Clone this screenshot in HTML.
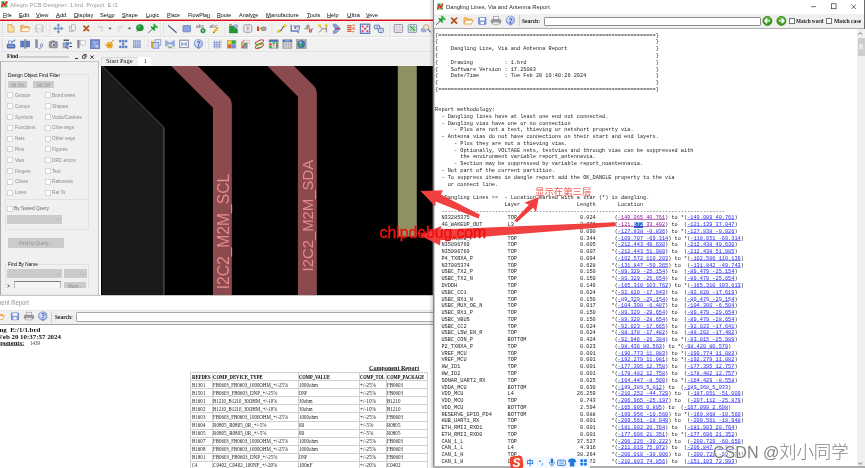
<!DOCTYPE html>
<html><head><meta charset="utf-8"><title>Allegro PCB Designer</title>
<style>
html,body{margin:0;padding:0;}
body{width:865px;height:468px;overflow:hidden;position:relative;background:#fff;font-family:"Liberation Sans",sans-serif;}
#root{position:absolute;left:0;top:0;width:865px;height:468px;overflow:hidden;filter:blur(0.35px);}
#root *{box-sizing:border-box;}
#root>*{position:absolute;}
.t{display:inline-block;white-space:pre;transform-origin:0 0;}
.bm{display:inline-block;width:0;height:0;}
.t u{text-decoration-thickness:0.6px;text-underline-offset:0.3px;text-decoration-color:rgba(30,30,30,0.62);}
pre#rep{left:435.1px;top:32.7px;margin:0;font-family:"Liberation Mono",monospace;font-size:5.25px;line-height:6.76px;color:#242424;white-space:pre;}
pre#rep a{color:#2a2aee;text-decoration:underline;text-decoration-thickness:0.42px;text-underline-offset:0.35px;text-decoration-color:rgba(42,42,238,0.6);}
pre#rep a.v{color:#8a1a9a;text-decoration-color:rgba(138,26,154,0.6);}
pre#rep .sel{background:#1a6ad6;color:#fff;}
</style></head><body>
<div id="root">
<svg style="left:1.20px;top:1.00px" width="6.6" height="6.6" viewBox="0 0 8 8"><rect x="0" y="0" width="8" height="8" fill="#86dc80"/><path d="M0.5 7.6 L3 2.2 L4.6 5.2 L7.6 0.4" stroke="#e0202a" stroke-width="1.7" fill="none"/><path d="M0.6 1.6h2.2M5 6.6h2.4" stroke="#2c9a3a" stroke-width="1.1"/></svg>
<span class="t" style="left:10.20px;top:1.81px;font-size:5.90px;line-height:7.67px;color:#9a9a9a;transform:scaleX(0.9857);">Allegro PCB Designer: 1.brd  Project: E:/1</span>
<span class="t" style="left:3.40px;top:11.76px;font-size:6.00px;line-height:7.80px;color:#0c0c0c;transform:scaleX(0.8981);"><u>F</u>ile</span>
<span class="t" style="left:19.10px;top:11.76px;font-size:6.00px;line-height:7.80px;color:#0c0c0c;transform:scaleX(0.9943);"><u>E</u>dit</span>
<span class="t" style="left:36.25px;top:11.76px;font-size:6.00px;line-height:7.80px;color:#0c0c0c;transform:scaleX(0.9480);"><u>V</u>iew</span>
<span class="t" style="left:55.90px;top:11.76px;font-size:6.00px;line-height:7.80px;color:#0c0c0c;transform:scaleX(0.9670);"><u>A</u>dd</span>
<span class="t" style="left:73.75px;top:11.76px;font-size:6.00px;line-height:7.80px;color:#0c0c0c;transform:scaleX(0.9829);"><u>D</u>isplay</span>
<span class="t" style="left:100.00px;top:11.76px;font-size:6.00px;line-height:7.80px;color:#0c0c0c;transform:scaleX(0.9393);">Set<u>u</u>p</span>
<span class="t" style="left:122.25px;top:11.76px;font-size:6.00px;line-height:7.80px;color:#0c0c0c;transform:scaleX(0.9007);"><u>S</u>hape</span>
<span class="t" style="left:145.75px;top:11.76px;font-size:6.00px;line-height:7.80px;color:#0c0c0c;transform:scaleX(0.9297);"><u>L</u>ogic</span>
<span class="t" style="left:167.00px;top:11.76px;font-size:6.00px;line-height:7.80px;color:#0c0c0c;transform:scaleX(0.8649);"><u>P</u>lace</span>
<span class="t" style="left:187.75px;top:11.76px;font-size:6.00px;line-height:7.80px;color:#0c0c0c;transform:scaleX(0.8911);">FlowPla<u>n</u></span>
<span class="t" style="left:217.25px;top:11.76px;font-size:6.00px;line-height:7.80px;color:#0c0c0c;transform:scaleX(0.8889);"><u>R</u>oute</span>
<span class="t" style="left:239.40px;top:11.76px;font-size:6.00px;line-height:7.80px;color:#0c0c0c;transform:scaleX(0.9059);">Analy<u>z</u>e</span>
<span class="t" style="left:266.25px;top:11.76px;font-size:6.00px;line-height:7.80px;color:#0c0c0c;transform:scaleX(0.9817);"><u>M</u>anufacture</span>
<span class="t" style="left:306.50px;top:11.76px;font-size:6.00px;line-height:7.80px;color:#0c0c0c;transform:scaleX(0.9454);"><u>T</u>ools</span>
<span class="t" style="left:327.25px;top:11.76px;font-size:6.00px;line-height:7.80px;color:#0c0c0c;transform:scaleX(0.9305);"><u>H</u>elp</span>
<span class="t" style="left:346.50px;top:11.76px;font-size:6.00px;line-height:7.80px;color:#0c0c0c;transform:scaleX(1.0167);"><u>U</u>ltra</span>
<span class="t" style="left:366.25px;top:11.76px;font-size:6.00px;line-height:7.80px;color:#0c0c0c;transform:scaleX(0.8945);"><u>V</u>eve</span>
<div style="left:0.00px;top:19.00px;width:433.00px;height:1.00px;background:rgba(214,22,28,0.5);"></div>
<div style="left:0.00px;top:20.00px;width:433.00px;height:1.00px;background:#d4141a;"></div>
<div style="left:0.00px;top:21.00px;width:433.00px;height:30.60px;background:#f1f1f1;"></div>
<div style="left:0.00px;top:35.90px;width:433.00px;height:0.70px;background:#e2e2e2;"></div>
<div style="left:0.00px;top:36.60px;width:433.00px;height:0.60px;background:#fbfbfb;"></div>
<svg style="left:0;top:20px" width="433" height="33" viewBox="0 20 433 33"><path d="M2.30 23.40V34.80" stroke="#b5b5b5" stroke-width="0.7" stroke-dasharray="0.7 1.1" fill="none"/>
<path d="M49.60 23.40V34.80" stroke="#b5b5b5" stroke-width="0.7" stroke-dasharray="0.7 1.1" fill="none"/>
<path d="M163.60 23.40V34.80" stroke="#b5b5b5" stroke-width="0.7" stroke-dasharray="0.7 1.1" fill="none"/>
<path d="M225.00 23.40V34.80" stroke="#b5b5b5" stroke-width="0.7" stroke-dasharray="0.7 1.1" fill="none"/>
<path d="M272.00 23.40V34.80" stroke="#b5b5b5" stroke-width="0.7" stroke-dasharray="0.7 1.1" fill="none"/>
<path d="M389.50 23.40V34.80" stroke="#b5b5b5" stroke-width="0.7" stroke-dasharray="0.7 1.1" fill="none"/>
<path d="M46.70 21.60V35.60" stroke="#dcdcdc" stroke-width="0.7" fill="none"/><path d="M47.40 21.60V35.60" stroke="#fafafa" stroke-width="0.7" fill="none"/>
<path d="M160.70 21.60V35.60" stroke="#dcdcdc" stroke-width="0.7" fill="none"/><path d="M161.40 21.60V35.60" stroke="#fafafa" stroke-width="0.7" fill="none"/>
<path d="M223.00 21.60V35.60" stroke="#dcdcdc" stroke-width="0.7" fill="none"/><path d="M223.70 21.60V35.60" stroke="#fafafa" stroke-width="0.7" fill="none"/>
<path d="M269.60 21.60V35.60" stroke="#dcdcdc" stroke-width="0.7" fill="none"/><path d="M270.30 21.60V35.60" stroke="#fafafa" stroke-width="0.7" fill="none"/>
<path d="M386.30 21.60V35.60" stroke="#dcdcdc" stroke-width="0.7" fill="none"/><path d="M387.00 21.60V35.60" stroke="#fafafa" stroke-width="0.7" fill="none"/>
<path d="M2.30 38.60V50.00" stroke="#b5b5b5" stroke-width="0.7" stroke-dasharray="0.7 1.1" fill="none"/>
<path d="M147.75 38.60V50.00" stroke="#b5b5b5" stroke-width="0.7" stroke-dasharray="0.7 1.1" fill="none"/>
<path d="M208.40 38.60V50.00" stroke="#b5b5b5" stroke-width="0.7" stroke-dasharray="0.7 1.1" fill="none"/>
<path d="M144.40 37.20V51.00" stroke="#dcdcdc" stroke-width="0.7" fill="none"/><path d="M145.10 37.20V51.00" stroke="#fafafa" stroke-width="0.7" fill="none"/>
<path d="M205.50 37.20V51.00" stroke="#dcdcdc" stroke-width="0.7" fill="none"/><path d="M206.20 37.20V51.00" stroke="#fafafa" stroke-width="0.7" fill="none"/>
<path d="M7.90 24.50h3.6l2.4 2.4v5.2h-6z" fill="#fbe3aa" stroke="#e49748" stroke-width="0.8" /><path d="M11.50 24.50v2.4h2.4" fill="#fff3cf" stroke="#e49748" stroke-width="0.6" />
<path d="M20.80 31.60v-6.2h3l1 1.2h4v1.6" fill="#f7c27a" stroke="#ea9a3c" stroke-width="0.8" /><path d="M20.80 31.60l1.8-3.8h7.4l-1.8 3.8z" fill="#fff" stroke="#ea9a3c" stroke-width="0.8" />
<rect x="35.70" y="25.00" width="7.20" height="6.80" fill="#dadada" stroke="#b9b9b9" stroke-width="0.8" rx="0.6"/><rect x="36.90" y="25.30" width="4.80" height="2.60" fill="#f6f6f6"/><rect x="37.60" y="29.30" width="3.40" height="2.40" fill="#f6f6f6"/>
<path d="M58.40 23.80v9.4M53.70 28.50h9.4" fill="none" stroke="#7d9dca" stroke-width="1.5" />
<path d="M58.40 23.50l1.9 2.2h-3.8zM58.40 33.50l1.9-2.2h-3.8zM53.40 28.50l2.2-1.9v3.8zM63.40 28.50l-2.2-1.9v3.8z" fill="#6f92c4" />
<rect x="69.40" y="26.20" width="4.20" height="5.40" fill="#ececec" stroke="#a9a9a9" stroke-width="0.7"/><rect x="71.40" y="24.80" width="4.20" height="5.40" fill="#f4f4f4" stroke="#a9a9a9" stroke-width="0.7"/>
<path d="M84.00 26.20l4.50 4.50M88.50 26.20l-4.50 4.50" fill="none" stroke="#b4501e" stroke-width="1.7" stroke-linecap="round"/>
<path d="M99 27.2c3-1.6 4.8 1 2.4 4.6" fill="none" stroke="#cfcfcf" stroke-width="1.1" /><path d="M98 25.6l0.4 3l2.6-1.2z" fill="#cfcfcf" />
<path d="M108.40 27.80h3.2l-1.6 1.7z" fill="#333"/>
<path d="M121.6 27.2c-3-1.6-4.8 1-2.4 4.6" fill="none" stroke="#d6d6d6" stroke-width="1.1" /><path d="M122.6 25.6l-0.4 3l-2.6-1.2z" fill="#d6d6d6" />
<path d="M127.90 27.80h3.2l-1.6 1.7z" fill="#333"/>
<path d="M136.4 32l1.6-2" fill="none" stroke="#777" stroke-width="0.7" /><ellipse cx="139.9" cy="27.8" rx="3.5" ry="3.2" fill="#1f9a32" stroke="#157026" stroke-width="0.5"/><circle cx="138.80" cy="26.60" r="1.10" fill="#5fcf6c"/>
<path d="M148.50 32.80L152.60 28.70" stroke="#4a4a4a" stroke-width="0.8" stroke-linecap="round" fill="none"/><path d="M155.10 26.30L153.10 28.30" stroke="#2aa83a" stroke-width="2.6" stroke-linecap="round" fill="none"/><path d="M151.50 27.00L154.50 30.00" stroke="#1f8f30" stroke-width="1.5" stroke-linecap="round" fill="none"/><path d="M154.10 24.60L156.90 27.40" stroke="#35b846" stroke-width="1.9" stroke-linecap="round" fill="none"/>
<path d="M168 25.2L176.6 32.8" fill="none" stroke="#56658f" stroke-width="1.2" />
<rect x="183.00" y="25.60" width="7.50" height="6.20" fill="#8ea4dc" stroke="#5a74b8" stroke-width="0.7" rx="0.5"/>
<text x="196" y="27.9" font-family="Liberation Sans, sans-serif" font-size="5" fill="#5a5a5a">abc</text><circle cx="203.00" cy="30.70" r="2.30" fill="#1f9a30" stroke="#15732a" stroke-width="0.4"/><path d="M203 29.7v2M202 30.7h2" fill="none" stroke="#fff" stroke-width="0.6" />
<text x="209.6" y="27.9" font-family="Liberation Sans, sans-serif" font-size="5" fill="#6a6a6a">abc</text><path d="M213.6 32.6l4.6-5.4" fill="none" stroke="#f2b21e" stroke-width="2" /><path d="M213 33.2l0.4-1.4l1 0.9z" fill="#444" />
<path d="M229.4 33v-7h4.4l3.6 3.2v3.8z" fill="#1f9a32" stroke="#157026" stroke-width="0.4" /><circle cx="235.80" cy="26.40" r="1.90" fill="#a9b9e0" stroke="#6a7cae" stroke-width="0.5"/><path d="M229 24.8h3" fill="none" stroke="#c43a2a" stroke-width="0.8" />
<rect x="243.80" y="24.80" width="8.00" height="7.40" fill="#eef1f8" stroke="#8b97b8" stroke-width="1" rx="1.6"/><path d="M246 27.4h3.6M246 29.4h3.6M247.8 26.4v4" fill="none" stroke="#d26a5a" stroke-width="0.6" />
<rect x="257.00" y="26.40" width="2.00" height="4.60" fill="#d1452c"/><rect x="259.00" y="27.60" width="2.00" height="2.20" fill="#f3d33a"/><ellipse cx="263.6" cy="28.8" rx="3" ry="2.3" fill="#8a8a8a"/><path d="M261.6 28.2h4M261.6 29.6h4" fill="none" stroke="#d8d8d8" stroke-width="0.5" />
<path d="M278.4 31.4l3-1l1.6-3.6l2.4-0.8" fill="none" stroke="#333" stroke-width="0.9" /><circle cx="278.20" cy="31.60" r="1.30" fill="#f3df1c" stroke="#c9b000" stroke-width="0.3"/><circle cx="285.00" cy="25.90" r="1.30" fill="#f3df1c" stroke="#c9b000" stroke-width="0.3"/>
<path d="M291.2 24.8v6.2h7v2M293.6 26.2h5.6v3.6" fill="none" stroke="#5c7cc4" stroke-width="1.3" /><circle cx="295.40" cy="28.00" r="1.00" fill="#d63c30"/><rect x="296.60" y="26.80" width="2.20" height="2.60" fill="#c7d3f0"/>
<path d="M304.4 28.8h2l0.8-3.6h1.6l0.8 7h1.6l0.6-3.4h1.4" fill="none" stroke="#7a7a7a" stroke-width="1" /><path d="M307.8 26v3.6M310.4 28.8v3" fill="none" stroke="#d8433a" stroke-width="0.6" />
<path d="M319.2 25.6l3 3.2l-3 3.6M326.4 25.6v6.8" fill="none" stroke="#8a8a8a" stroke-width="1" /><path d="M322.4 28.8h3.6" fill="none" stroke="#d63c30" stroke-width="0.8" /><circle cx="319.60" cy="25.50" r="1.30" fill="#f3df1c" stroke="#c9b000" stroke-width="0.3"/><circle cx="326.20" cy="25.50" r="1.30" fill="#f3df1c" stroke="#c9b000" stroke-width="0.3"/>
<path d="M333.4 24.2h2.4l4.8 4.4l-4.8 4.6h-2.4v-2.2l2.6-2.4l-2.6-2.2z" fill="#8aa2dc" stroke="#5570b8" stroke-width="0.6" /><path d="M335 28.6h3.4" fill="none" stroke="#b8322a" stroke-width="1.1" /><path d="M338 27.6l1.4 1l-1.4 1z" fill="#b8322a" />
<rect x="347.20" y="25.00" width="4.40" height="1.20" fill="#d5502c"/><rect x="352.20" y="24.70" width="2.80" height="1.00" fill="#e0714c"/>
<rect x="347.20" y="26.90" width="4.40" height="1.20" fill="#d5502c"/><rect x="352.20" y="27.40" width="2.80" height="1.00" fill="#e0714c"/>
<rect x="347.20" y="28.80" width="4.40" height="1.20" fill="#d5502c"/><rect x="352.20" y="28.50" width="2.80" height="1.00" fill="#e0714c"/>
<rect x="347.20" y="30.70" width="4.40" height="1.20" fill="#d5502c"/><rect x="352.20" y="31.20" width="2.00" height="1.00" fill="#e0714c"/>
<rect x="360.40" y="24.20" width="9.30" height="9.20" fill="#dfe5f6" stroke="#5d7cc6" stroke-width="1.2"/>
<path d="M362 25.8l6 6M368 25.8l-6 6" fill="none" stroke="#e9a7a0" stroke-width="0.7" />
<circle cx="362.60" cy="26.40" r="0.95" fill="#dc3a30"/>
<circle cx="367.40" cy="26.40" r="0.95" fill="#dc3a30"/>
<circle cx="365.00" cy="28.80" r="0.95" fill="#dc3a30"/>
<circle cx="362.60" cy="31.20" r="0.95" fill="#dc3a30"/>
<circle cx="367.40" cy="31.20" r="0.95" fill="#dc3a30"/>
<rect x="374.40" y="25.20" width="5.20" height="3.60" fill="#e8ecf8" stroke="#5d76b4" stroke-width="1" rx="0.6"/><rect x="378.40" y="28.20" width="4.80" height="4.20" fill="#e8ecf8" stroke="#5d76b4" stroke-width="1" rx="0.6"/><path d="M376 27h2M380 30.4h1.6" fill="none" stroke="#3c4f8c" stroke-width="0.6" />
<rect x="394.20" y="24.60" width="8.40" height="7.80" fill="#f0f2f8" stroke="#7f8db4" stroke-width="0.9" rx="0.6"/><path d="M397 25v7M399.8 25v7M394.6 27.2h7.6M394.6 29.8h7.6" fill="none" stroke="#e0a8a0" stroke-width="0.6" />
<rect x="408.20" y="24.60" width="8.40" height="7.80" fill="#f0f2f8" stroke="#7f8db4" stroke-width="0.9" rx="0.6"/><path d="M411 25v7M413.8 25v7M408.6 27.2h7.6M408.6 29.8h7.6" fill="none" stroke="#58b85c" stroke-width="0.8" /><path d="M410 26l5 5" fill="none" stroke="#2d9a3a" stroke-width="0.9" />
<rect x="421.40" y="28.40" width="4.60" height="3.40" fill="#9db3e4" stroke="#6a84c8" stroke-width="0.5" rx="0.5"/><circle cx="426.20" cy="27.20" r="2.70" fill="#dbe6f8" stroke="#d99a5c" stroke-width="0.9"/><path d="M428.2 29.4l2.6 3" fill="none" stroke="#5870b4" stroke-width="1.3" />
<rect x="7.00" y="44.20" width="8.00" height="4.00" fill="#4e6fb6" stroke="#3c5a9c" stroke-width="0.4" rx="0.6"/><rect x="8.40" y="41.00" width="3.40" height="3.00" fill="#e6ebf8" stroke="#6a84c4" stroke-width="0.6"/><path d="M12 42.4l3.2-2.6" fill="none" stroke="#5d7cc6" stroke-width="1.1" /><path d="M8.2 46.2h5.6" fill="none" stroke="#e0e6f6" stroke-width="0.7" />
<rect x="20.60" y="41.00" width="3.80" height="6.00" fill="#5a7cc4" stroke="#4666ae" stroke-width="0.4"/><rect x="26.00" y="41.00" width="3.80" height="6.00" fill="#5a7cc4" stroke="#4666ae" stroke-width="0.4"/><rect x="24.30" y="39.80" width="1.80" height="8.60" fill="#8c95a8" stroke="#6c7484" stroke-width="0.3"/>
<rect x="35.60" y="39.80" width="2.00" height="8.00" fill="#8c8c94" stroke="#6c6c74" stroke-width="0.3"/><path d="M38.6 48.4c2.8 0.4 4.6-2.8 3.8-4.6c-1.6-1-2.6 1.6-1.4 3" fill="none" stroke="#6b84c4" stroke-width="1" />
<rect x="49.20" y="41.60" width="8.20" height="6.20" fill="#9a9a9a" stroke="#707070" stroke-width="0.5" rx="0.8"/><rect x="51.40" y="40.40" width="3.20" height="1.40" fill="#8a8a8a"/><circle cx="53.60" cy="44.80" r="2.30" fill="#e8ecf4" stroke="#666" stroke-width="0.5"/><circle cx="53.90" cy="44.90" r="1.10" fill="#3f63b4"/>
<rect x="63.00" y="42.60" width="5.00" height="5.20" fill="#a3aec6" stroke="#6f7a94" stroke-width="0.5" rx="0.6"/><path d="M65.4 46.6l3 2" fill="none" stroke="#5d76b4" stroke-width="1.4" /><rect x="63.60" y="39.60" width="5.40" height="1.20" fill="#333"/><rect x="69.40" y="42.60" width="2.40" height="1.00" fill="#333"/><rect x="69.40" y="46.00" width="2.40" height="1.00" fill="#333"/><rect x="66.00" y="42.20" width="3.00" height="3.00" fill="#5b7ccc"/>
<rect x="77.60" y="40.20" width="1.70" height="7.60" fill="#85878e" stroke="#6a6c74" stroke-width="0.3"/><path d="M78.5 47.6v1.2" fill="none" stroke="#777" stroke-width="0.7" /><rect x="80.60" y="40.40" width="4.60" height="4.60" fill="#fbfbfb" stroke="#b4b4b4" stroke-width="0.6"/>
<rect x="90.40" y="39.80" width="9.30" height="8.80" fill="#7690d2" stroke="#4f6db6" stroke-width="0.7"/><path d="M92.6 42h2.2v1.6M97.6 41.6l-2.4 2.2M92.4 46.6l2.4-2M95.8 45.4h2.2v1.8h-2.2z" fill="none" stroke="#dfe6f8" stroke-width="0.8" />
<path d="M104.8 45.2h3.4M110.4 43.6l2.6-3" fill="none" stroke="#f3a21e" stroke-width="1" /><circle cx="109.60" cy="45.20" r="2.90" fill="#f8b62a" stroke="#d98a10" stroke-width="0.6"/><path d="M108.2 45.4h3" fill="none" stroke="#8a5a10" stroke-width="0.7" /><circle cx="113.20" cy="40.60" r="0.80" fill="#f3a21e"/>
<rect x="119.20" y="40.00" width="2.10" height="2.30" fill="#6c89cf" stroke="#4f6cb6" stroke-width="0.3" rx="0.5"/>
<rect x="119.20" y="45.80" width="2.10" height="2.30" fill="#6c89cf" stroke="#4f6cb6" stroke-width="0.3" rx="0.5"/>
<rect x="122.10" y="40.00" width="2.10" height="2.30" fill="#6c89cf" stroke="#4f6cb6" stroke-width="0.3" rx="0.5"/>
<rect x="122.10" y="42.90" width="2.10" height="2.30" fill="#6c89cf" stroke="#4f6cb6" stroke-width="0.3" rx="0.5"/>
<rect x="122.10" y="45.80" width="2.10" height="2.30" fill="#6c89cf" stroke="#4f6cb6" stroke-width="0.3" rx="0.5"/>
<rect x="125.00" y="40.00" width="2.10" height="2.30" fill="#6c89cf" stroke="#4f6cb6" stroke-width="0.3" rx="0.5"/>
<rect x="125.00" y="45.80" width="2.10" height="2.30" fill="#6c89cf" stroke="#4f6cb6" stroke-width="0.3" rx="0.5"/>
<rect x="133.00" y="40.20" width="1.60" height="1.60" fill="#6c86c8" rx="0.4"/>
<rect x="133.00" y="42.25" width="1.60" height="1.60" fill="#6c86c8" rx="0.4"/>
<rect x="133.00" y="44.30" width="1.60" height="1.60" fill="#6c86c8" rx="0.4"/>
<rect x="133.00" y="46.35" width="1.60" height="1.60" fill="#6c86c8" rx="0.4"/>
<rect x="135.05" y="40.20" width="1.60" height="1.60" fill="#6c86c8" rx="0.4"/>
<rect x="135.05" y="42.25" width="1.60" height="1.60" fill="#6c86c8" rx="0.4"/>
<rect x="135.05" y="44.30" width="1.60" height="1.60" fill="#6c86c8" rx="0.4"/>
<rect x="135.05" y="46.35" width="1.60" height="1.60" fill="#6c86c8" rx="0.4"/>
<rect x="137.10" y="40.20" width="1.60" height="1.60" fill="#6c86c8" rx="0.4"/>
<rect x="137.10" y="42.25" width="1.60" height="1.60" fill="#6c86c8" rx="0.4"/>
<rect x="137.10" y="44.30" width="1.60" height="1.60" fill="#6c86c8" rx="0.4"/>
<rect x="137.10" y="46.35" width="1.60" height="1.60" fill="#6c86c8" rx="0.4"/>
<rect x="139.15" y="40.20" width="1.60" height="1.60" fill="#6c86c8" rx="0.4"/>
<rect x="139.15" y="42.25" width="1.60" height="1.60" fill="#6c86c8" rx="0.4"/>
<rect x="139.15" y="44.30" width="1.60" height="1.60" fill="#6c86c8" rx="0.4"/>
<rect x="139.15" y="46.35" width="1.60" height="1.60" fill="#6c86c8" rx="0.4"/>
<rect x="155.00" y="39.80" width="5.80" height="5.80" fill="#e9eefb" stroke="#6f88cc" stroke-width="0.7"/><rect x="152.80" y="42.40" width="6.00" height="5.80" fill="#c5d1f0" stroke="#5f7ac4" stroke-width="0.7"/><rect x="151.20" y="41.60" width="1.80" height="6.00" fill="#d8a43c" stroke="#b8862a" stroke-width="0.3"/>
<path d="M165.6 40.4l4.4 2.6l4.4-2.6v5.8l-4.4-2.6l-4.4 2.6z" fill="#9ab0e4" stroke="#6e88cc" stroke-width="0.5" /><rect x="168.00" y="46.40" width="6.60" height="1.60" fill="#fff" stroke="#999" stroke-width="0.4"/><rect x="168.40" y="46.70" width="3.60" height="1.00" fill="#3fb44a"/>
<rect x="179.60" y="40.20" width="8.80" height="7.40" fill="#f2f4f8" stroke="#8a8e9c" stroke-width="1"/><path d="M181.4 42.4l2.6 1.5l2.6-1.5v3.4l-2.6-1.5l-2.6 1.5z" fill="#9ab0e4" stroke="#6e88cc" stroke-width="0.4" />
<circle cx="198.40" cy="43.80" r="4.10" fill="#aebfec" stroke="#6a80c4" stroke-width="0.7"/><path d="M197.20 47.00l1.6 2.4l1.2-2.6z" fill="#6a82c8" /><circle cx="197.80" cy="42.80" r="2.60" fill="#dbe4f8"/><text x="196.60" y="46.10" font-family="Liberation Sans, sans-serif" font-weight="bold" font-size="6.4" fill="#2a3f96">?</text>
<path d="M214.6 40.6v8M217 40.6v8M219.4 40.6v8M213 42.4h8.6M213 44.6h8.6M213 46.8h8.6" fill="none" stroke="#6f88c8" stroke-width="0.7" /><path d="M220.4 39.6l1.6 1.8" fill="none" stroke="#f0a858" stroke-width="1" />
<rect x="227.00" y="40.00" width="9.20" height="8.60" fill="#a8a8a8"/><rect x="227.90" y="40.80" width="3.40" height="3.00" fill="#f3dc1e"/><rect x="232.00" y="40.80" width="3.40" height="3.00" fill="#2fae3e"/><rect x="227.90" y="44.80" width="3.40" height="3.00" fill="#e0602c"/><rect x="232.00" y="44.80" width="3.40" height="3.00" fill="#6f8cd8"/>
<rect x="241.20" y="42.60" width="6.40" height="6.00" fill="#909090"/><circle cx="242.80" cy="44.20" r="0.90" fill="#f3dc1e"/><circle cx="245.80" cy="44.20" r="0.90" fill="#2fae3e"/><circle cx="242.80" cy="47.00" r="0.90" fill="#e0602c"/><circle cx="245.80" cy="47.00" r="0.90" fill="#6f8cd8"/><path d="M241.4 42.2l3.4-2" fill="none" stroke="#d8433a" stroke-width="0.9" /><rect x="246.00" y="39.80" width="1.60" height="1.60" fill="#c9c9c9"/><rect x="248.40" y="39.80" width="1.60" height="1.60" fill="#c9c9c9"/><rect x="248.40" y="42.40" width="1.60" height="1.60" fill="#c9c9c9"/>
<ellipse cx="259.4" cy="42.2" rx="4.4" ry="1.6" fill="none" stroke="#d8433a" stroke-width="1" transform="rotate(-22 259.4 42.2)"/><ellipse cx="259.4" cy="46.2" rx="4.4" ry="1.6" fill="none" stroke="#d8433a" stroke-width="1" transform="rotate(-22 259.4 46.2)"/><path d="M256 44.6l6.6-1.4M257 48l5-1" fill="none" stroke="#2fa63e" stroke-width="1.1" /><circle cx="258.40" cy="44.40" r="0.80" fill="#e8d81e"/>
<rect x="269.00" y="39.80" width="9.20" height="8.80" fill="#c2c2c2" stroke="#8f8f8f" stroke-width="0.4"/><rect x="269.00" y="39.80" width="9.20" height="2.00" fill="#4f6fc0"/><path d="M272 42v6.4M275.2 42v6.4" fill="none" stroke="#f4f4f4" stroke-width="0.8" /><rect x="269.60" y="43.60" width="2.00" height="1.60" fill="#e0302c"/><rect x="272.80" y="42.40" width="2.00" height="1.60" fill="#2fae3e"/><rect x="276.00" y="44.80" width="1.80" height="1.60" fill="#e0302c"/><rect x="269.60" y="45.80" width="2.00" height="2.20" fill="#2fae3e"/><rect x="276.00" y="42.20" width="1.80" height="2.20" fill="#2fae3e"/><rect x="276.00" y="46.80" width="1.80" height="1.40" fill="#2fae3e"/>
<rect x="282.80" y="39.80" width="9.20" height="8.80" fill="#b4b4b4" stroke="#8f8f8f" stroke-width="0.4"/><rect x="282.80" y="39.80" width="9.20" height="2.20" fill="#4f6fc0"/><path d="M285.2 42v6.4M287.4 42v6.4M289.6 42v6.4" fill="none" stroke="#e6e6e6" stroke-width="0.7" /><path d="M284.6 40.9h5.4" fill="none" stroke="#dfe6fa" stroke-width="0.7" />
<rect x="296.40" y="39.60" width="9.80" height="9.20" fill="#a4a4a4" stroke="#8a8a8a" stroke-width="0.4"/><circle cx="301.20" cy="44.20" r="3.50" fill="#3f6fd0" stroke="#2d55a8" stroke-width="0.4"/><path d="M299 42.2c1.4-1 2.6-0.4 2.4 0.8c-0.4 1.2 1.8 1 1.4 2.6c-0.6 1.4-2 0.4-2.4 1.8c-1.6-0.4-2.4-3.2-1.4-5.2z" fill="#3fae4a" /><circle cx="300.60" cy="42.40" r="0.90" fill="#dfe9fb"/></svg>
<div style="left:0.00px;top:51.60px;width:101.00px;height:10.00px;background:#f0f0f0;"></div>
<div style="left:0.00px;top:51.40px;width:433.00px;height:0.60px;background:#e3e3e3;"></div>
<span class="t" style="left:6.90px;top:53.11px;font-size:5.60px;line-height:7.28px;color:#111;font-family:'Liberation Serif','Noto Serif CJK SC',serif;font-weight:bold;transform:scaleX(0.9997);">Find</span>
<div style="left:19.40px;top:56.00px;width:49.60px;height:2.00px;background:#cfcfcf;"></div>
<div style="left:74.50px;top:57.90px;width:3.60px;height:1.00px;background:#333;"></div>
<svg style="left:81.80px;top:54.20px" width="4.8" height="4.8" viewBox="0 0 4.8 4.8"><path d="M1.5 0.5h2.8v2.6M0.5 1.7h2.8v2.6h-2.8z" fill="none" stroke="#333" stroke-width="0.8"/></svg>
<svg style="left:90.40px;top:54.60px" width="4.2" height="4.2" viewBox="0 0 4.2 4.2"><path d="M0.5 0.5L3.7 3.7M3.7 0.5L0.5 3.7" stroke="#222" stroke-width="0.9"/></svg>
<div style="left:0.00px;top:61.20px;width:99.20px;height:234.60px;background:#f0f0f0;border:0.8px solid #c3c3c3;border-left:1.1px solid #a9a9a9;"></div>
<div style="left:5.00px;top:74.40px;width:84.00px;height:155.90px;border:0.7px solid #e1e1e1;"></div>
<div style="left:7.40px;top:72.00px;width:53.40px;height:5.00px;background:#f0f0f0;"></div>
<span class="t" style="left:8.00px;top:71.71px;font-size:5.60px;line-height:7.28px;color:#0e0e0e;transform:scaleX(0.8447);">Design Object Find Filter</span>
<div style="left:7.60px;top:81.30px;width:19.30px;height:6.90px;background:#cbcbcb;"></div>
<span class="t" style="left:10.60px;top:81.90px;font-size:5.40px;line-height:7.02px;color:#969696;transform:scaleX(0.9055);">All On</span>
<div style="left:32.90px;top:81.30px;width:21.00px;height:6.90px;background:#cbcbcb;"></div>
<span class="t" style="left:37.20px;top:81.90px;font-size:5.40px;line-height:7.02px;color:#969696;transform:scaleX(0.8771);">All Off</span>
<div style="left:7.20px;top:92.30px;width:6.00px;height:6.00px;background:#fff;border:1px solid #d6d6d6;"></div>
<span class="t" style="left:14.70px;top:91.90px;font-size:5.40px;line-height:7.02px;color:#8a8a8a;transform:scaleX(0.875);">Groups</span>
<div style="left:45.00px;top:92.30px;width:6.00px;height:6.00px;background:#fff;border:1px solid #d6d6d6;"></div>
<span class="t" style="left:52.20px;top:91.90px;font-size:5.40px;line-height:7.02px;color:#8a8a8a;transform:scaleX(0.875);">Bond wires</span>
<div style="left:7.20px;top:103.10px;width:6.00px;height:6.00px;background:#fff;border:1px solid #d6d6d6;"></div>
<span class="t" style="left:14.70px;top:102.71px;font-size:5.40px;line-height:7.02px;color:#8a8a8a;transform:scaleX(0.875);">Comps</span>
<div style="left:45.00px;top:103.10px;width:6.00px;height:6.00px;background:#fff;border:1px solid #d6d6d6;"></div>
<span class="t" style="left:52.20px;top:102.71px;font-size:5.40px;line-height:7.02px;color:#8a8a8a;transform:scaleX(0.875);">Shapes</span>
<div style="left:7.20px;top:113.90px;width:6.00px;height:6.00px;background:#fff;border:1px solid #d6d6d6;"></div>
<span class="t" style="left:14.70px;top:113.51px;font-size:5.40px;line-height:7.02px;color:#8a8a8a;transform:scaleX(0.875);">Symbols</span>
<div style="left:45.00px;top:113.90px;width:6.00px;height:6.00px;background:#fff;border:1px solid #d6d6d6;"></div>
<span class="t" style="left:52.20px;top:113.51px;font-size:5.40px;line-height:7.02px;color:#8a8a8a;transform:scaleX(0.875);">Voids/Cavities</span>
<div style="left:7.20px;top:124.70px;width:6.00px;height:6.00px;background:#fff;border:1px solid #d6d6d6;"></div>
<span class="t" style="left:14.70px;top:124.31px;font-size:5.40px;line-height:7.02px;color:#8a8a8a;transform:scaleX(0.875);">Functions</span>
<div style="left:45.00px;top:124.70px;width:6.00px;height:6.00px;background:#fff;border:1px solid #d6d6d6;"></div>
<span class="t" style="left:52.20px;top:124.31px;font-size:5.40px;line-height:7.02px;color:#8a8a8a;transform:scaleX(0.875);">Cline segs</span>
<div style="left:7.20px;top:135.50px;width:6.00px;height:6.00px;background:#fff;border:1px solid #d6d6d6;"></div>
<span class="t" style="left:14.70px;top:135.10px;font-size:5.40px;line-height:7.02px;color:#8a8a8a;transform:scaleX(0.875);">Nets</span>
<div style="left:45.00px;top:135.50px;width:6.00px;height:6.00px;background:#fff;border:1px solid #d6d6d6;"></div>
<span class="t" style="left:52.20px;top:135.10px;font-size:5.40px;line-height:7.02px;color:#8a8a8a;transform:scaleX(0.875);">Other segs</span>
<div style="left:7.20px;top:146.30px;width:6.00px;height:6.00px;background:#fff;border:1px solid #d6d6d6;"></div>
<span class="t" style="left:14.70px;top:145.90px;font-size:5.40px;line-height:7.02px;color:#8a8a8a;transform:scaleX(0.875);">Pins</span>
<div style="left:45.00px;top:146.30px;width:6.00px;height:6.00px;background:#fff;border:1px solid #d6d6d6;"></div>
<span class="t" style="left:52.20px;top:145.90px;font-size:5.40px;line-height:7.02px;color:#8a8a8a;transform:scaleX(0.875);">Figures</span>
<div style="left:7.20px;top:157.10px;width:6.00px;height:6.00px;background:#fff;border:1px solid #d6d6d6;"></div>
<span class="t" style="left:14.70px;top:156.71px;font-size:5.40px;line-height:7.02px;color:#8a8a8a;transform:scaleX(0.875);">Vias</span>
<div style="left:45.00px;top:157.10px;width:6.00px;height:6.00px;background:#fff;border:1px solid #d6d6d6;"></div>
<span class="t" style="left:52.20px;top:156.71px;font-size:5.40px;line-height:7.02px;color:#8a8a8a;transform:scaleX(0.875);">DRC errors</span>
<div style="left:7.20px;top:167.90px;width:6.00px;height:6.00px;background:#fff;border:1px solid #d6d6d6;"></div>
<span class="t" style="left:14.70px;top:167.51px;font-size:5.40px;line-height:7.02px;color:#8a8a8a;transform:scaleX(0.875);">Fingers</span>
<div style="left:45.00px;top:167.90px;width:6.00px;height:6.00px;background:#fff;border:1px solid #d6d6d6;"></div>
<span class="t" style="left:52.20px;top:167.51px;font-size:5.40px;line-height:7.02px;color:#8a8a8a;transform:scaleX(0.875);">Text</span>
<div style="left:7.20px;top:178.70px;width:6.00px;height:6.00px;background:#fff;border:1px solid #d6d6d6;"></div>
<span class="t" style="left:14.70px;top:178.31px;font-size:5.40px;line-height:7.02px;color:#8a8a8a;transform:scaleX(0.875);">Clines</span>
<div style="left:45.00px;top:178.70px;width:6.00px;height:6.00px;background:#fff;border:1px solid #d6d6d6;"></div>
<span class="t" style="left:52.20px;top:178.31px;font-size:5.40px;line-height:7.02px;color:#8a8a8a;transform:scaleX(0.875);">Ratsnests</span>
<div style="left:7.20px;top:189.50px;width:6.00px;height:6.00px;background:#fff;border:1px solid #d6d6d6;"></div>
<span class="t" style="left:14.70px;top:189.10px;font-size:5.40px;line-height:7.02px;color:#8a8a8a;transform:scaleX(0.875);">Lines</span>
<div style="left:45.00px;top:189.50px;width:6.00px;height:6.00px;background:#fff;border:1px solid #d6d6d6;"></div>
<span class="t" style="left:52.20px;top:189.10px;font-size:5.40px;line-height:7.02px;color:#8a8a8a;transform:scaleX(0.875);">Rat Ts</span>
<div style="left:5.40px;top:198.50px;width:83.40px;height:0.70px;background:#e1e1e1;"></div>
<div style="left:7.20px;top:205.70px;width:6.00px;height:6.00px;background:#fff;border:1px solid #d6d6d6;"></div>
<span class="t" style="left:14.40px;top:205.40px;font-size:5.40px;line-height:7.02px;color:#6a6a6a;transform:scaleX(0.8914);">By Saved Query</span>
<div style="left:7.20px;top:215.10px;width:54.70px;height:9.20px;background:#cbcbcb;"></div>
<svg style="left:56.00px;top:218.40px" width="4" height="3" viewBox="0 0 4 3"><path d="M0.4 0.5L2 2.1L3.6 0.5" fill="none" stroke="#a2a2a2" stroke-width="0.6"/></svg>
<div style="left:7.80px;top:238.20px;width:55.80px;height:9.40px;background:#cbcbcb;"></div>
<span class="t" style="left:18.90px;top:239.60px;font-size:5.40px;line-height:7.02px;color:#8e8e8e;transform:scaleX(0.8642);">Find by Query...</span>
<div style="left:5.00px;top:264.00px;width:84.00px;height:40.00px;border:0.7px solid #e1e1e1;"></div>
<div style="left:7.40px;top:261.00px;width:31.00px;height:5.00px;background:#f0f0f0;"></div>
<span class="t" style="left:8.00px;top:260.91px;font-size:5.60px;line-height:7.28px;color:#0a0a0a;transform:scaleX(0.8405);">Find By Name</span>
<div style="left:7.20px;top:269.30px;width:54.70px;height:9.10px;background:#cbcbcb;"></div>
<svg style="left:56.00px;top:272.60px" width="4" height="3" viewBox="0 0 4 3"><path d="M0.4 0.5L2 2.1L3.6 0.5" fill="none" stroke="#a2a2a2" stroke-width="0.6"/></svg>
<div style="left:64.10px;top:269.30px;width:22.90px;height:9.10px;background:#cbcbcb;"></div>
<svg style="left:81.10px;top:272.60px" width="4" height="3" viewBox="0 0 4 3"><path d="M0.4 0.5L2 2.1L3.6 0.5" fill="none" stroke="#a2a2a2" stroke-width="0.6"/></svg>
<svg style="left:7.00px;top:283.90px" width="3.2" height="3.8" viewBox="0 0 3.2 3.8"><path d="M0.5 0.5L2.5 1.9L0.5 3.3" fill="none" stroke="#333" stroke-width="0.7"/></svg>
<div style="left:14.20px;top:280.70px;width:46.90px;height:8.00px;background:#f5f5f5;border:0.7px solid #b8b8b8;border-top:1px solid #7c7c7c;"></div>
<div style="left:64.40px;top:281.60px;width:21.50px;height:7.00px;background:#cbcbcb;"></div>
<span class="t" style="left:67.80px;top:282.60px;font-size:5.40px;line-height:7.02px;color:#8a8a8a;transform:scaleX(0.8581);">More...</span>
<div style="left:1.20px;top:287.90px;width:97.20px;height:7.60px;background:#f0f0f0;"></div>
<div style="left:1.20px;top:293.00px;width:97.20px;height:2.60px;background:#e9e9e9;"></div>
<div style="left:99.20px;top:52.00px;width:333.80px;height:13.60px;background:#f0f0f0;"></div>
<div style="left:101.40px;top:57.20px;width:36.80px;height:0.70px;background:#d9d9d9;"></div>
<div style="left:101.30px;top:57.20px;width:0.70px;height:8.30px;background:#d9d9d9;"></div>
<div style="left:138.20px;top:57.00px;width:13.20px;height:8.60px;background:#fff;"></div>
<span class="t" style="left:105.60px;top:58.41px;font-size:5.60px;line-height:7.28px;color:#111;font-family:'Liberation Serif','Noto Serif CJK SC',serif;transform:scaleX(1.1644);">Start Page</span>
<span class="t" style="left:143.80px;top:58.21px;font-size:5.60px;line-height:7.28px;color:#111;font-family:'Liberation Serif','Noto Serif CJK SC',serif;">1</span>
<svg style="left:101.2px;top:65.5px" width="331.8" height="229.8" viewBox="101.2 65.5 331.8 229.8">
<rect x="101.2" y="65.5" width="331.8" height="229.8" fill="#000"/>
<path d="M102.2 66.3 L164.2 127.6 L164.2 294.4 L102.2 294.4 Z" fill="#1a1a1a"/>
<path d="M102.4 65.5 L164.2 127 L164.2 295.3" fill="none" stroke="#8e8e8e" stroke-width="0.65"/>
<path d="M144.7 25.5 L222.6 103.4 L222.6 300" fill="none" stroke="#8b4a4e" stroke-width="18.9" stroke-linejoin="round"/>
<path d="M240.9 25.5 L307.55 92.15 L307.55 300" fill="none" stroke="#8b4a4e" stroke-width="18.9" stroke-linejoin="round"/>
<rect x="398" y="65.5" width="19" height="170.5" fill="#8f9162"/>
<text transform="translate(229,288.8) rotate(-90)" font-family="Liberation Sans, sans-serif" font-size="15.9" textLength="115.4" lengthAdjust="spacingAndGlyphs" fill="#e88a8e">I2C2_M2M_SCL</text>
<text transform="translate(312.9,271) rotate(-90)" font-family="Liberation Sans, sans-serif" font-size="14.9" textLength="111.6" lengthAdjust="spacingAndGlyphs" fill="#e88a8e">I2C2_M2M_SDA</text>
</svg>
<div style="left:0.00px;top:295.30px;width:433.00px;height:172.70px;background:#fff;border-top:0.8px solid #c6c6c6;"></div>
<span class="t" style="left:-21.20px;top:298.75px;font-size:6.30px;line-height:8.19px;color:#939393;transform:scaleX(0.9386);">Component Report</span>
<div style="left:0.00px;top:309.80px;width:433.00px;height:14.80px;background:#f0f0f0;border-bottom:1px solid #a4a4a4;border-top:0.6px solid #e6e6e6;"></div>
<div style="left:76.20px;top:312.40px;width:362.00px;height:9.20px;background:#fff;border:0.8px solid #a9a9a9;border-radius:1.2px;"></div>
<span class="t" style="left:54.75px;top:314.01px;font-size:5.70px;line-height:7.41px;color:#1a1a1a;font-family:'Liberation Serif','Noto Serif CJK SC',serif;font-weight:bold;transform:scaleX(0.9570);">Search:</span>
<div style="left:51.20px;top:311.60px;width:0.70px;height:11.00px;background:#d0d0d0;"></div>
<svg style="left:0;top:310px" width="52" height="14" viewBox="0 310 52 14"><path d="M-5.00 319.60v-6.2h3l1 1.2h4v1.6" fill="#f7c27a" stroke="#ea9a3c" stroke-width="0.8" /><path d="M-5.00 319.60l1.8-3.8h7.4l-1.8 3.8z" fill="#fff" stroke="#ea9a3c" stroke-width="0.8" /><rect x="11.40" y="312.90" width="7.20" height="6.80" fill="#7d97dd" stroke="#5b78c7" stroke-width="0.8" rx="0.6"/><rect x="12.60" y="313.20" width="4.80" height="2.60" fill="#fff"/><rect x="13.30" y="317.20" width="3.40" height="2.40" fill="#fff"/><rect x="26.20" y="312.20" width="5.40" height="3.60" fill="#f4f4f4" stroke="#8c8c8c" stroke-width="0.6"/><rect x="24.20" y="315.20" width="9.50" height="3.60" fill="#9a9a9a" stroke="#777" stroke-width="0.5" rx="0.8"/><rect x="25.80" y="317.60" width="6.20" height="2.40" fill="#e8e8e8" stroke="#8c8c8c" stroke-width="0.5"/><circle cx="42.80" cy="316.00" r="4.10" fill="#aebfec" stroke="#6a80c4" stroke-width="0.7"/><path d="M41.60 319.20l1.6 2.4l1.2-2.6z" fill="#6a82c8" /><circle cx="42.20" cy="315.00" r="2.60" fill="#dbe4f8"/><text x="41.00" y="318.30" font-family="Liberation Sans, sans-serif" font-weight="bold" font-size="6.4" fill="#2a3f96">?</text></svg>
<span class="t" style="left:-19.38px;top:327.26px;font-size:6.00px;line-height:7.80px;color:#111;font-family:'Liberation Serif','Noto Serif CJK SC',serif;font-weight:bold;transform:scaleX(1.1526);">Drawing  E:/1/1.brd</span>
<span class="t" style="left:-13.75px;top:333.76px;font-size:6.00px;line-height:7.80px;color:#111;font-family:'Liberation Serif','Noto Serif CJK SC',serif;font-weight:bold;transform:scaleX(1.1516);">Tue Feb 20 10:37:57 2024</span>
<span class="t" style="left:-29.38px;top:339.76px;font-size:6.00px;line-height:7.80px;color:#111;font-family:'Liberation Serif','Noto Serif CJK SC',serif;font-weight:bold;transform:scaleX(1.0852);"><u>Total Components:</u></span>
<span class="t" style="left:30.00px;top:339.76px;font-size:5.80px;line-height:7.54px;color:#444;font-family:'Liberation Serif','Noto Serif CJK SC',serif;transform:scaleX(0.8625);">1439</span>
<span class="t" style="left:368.80px;top:364.91px;font-size:6.00px;line-height:7.80px;color:#111;font-family:'Liberation Serif','Noto Serif CJK SC',serif;font-weight:bold;transform:scaleX(1.0141);"><u>Component Report</u></span>
<div style="left:190.50px;top:372.10px;width:237.00px;height:0.90px;background:#d0d0d0;"></div>
<div style="left:190.50px;top:380.17px;width:237.00px;height:0.90px;background:#d0d0d0;"></div>
<div style="left:190.50px;top:388.24px;width:237.00px;height:0.90px;background:#d0d0d0;"></div>
<div style="left:190.50px;top:396.31px;width:237.00px;height:0.90px;background:#d0d0d0;"></div>
<div style="left:190.50px;top:404.38px;width:237.00px;height:0.90px;background:#d0d0d0;"></div>
<div style="left:190.50px;top:412.45px;width:237.00px;height:0.90px;background:#d0d0d0;"></div>
<div style="left:190.50px;top:420.52px;width:237.00px;height:0.90px;background:#d0d0d0;"></div>
<div style="left:190.50px;top:428.59px;width:237.00px;height:0.90px;background:#d0d0d0;"></div>
<div style="left:190.50px;top:436.66px;width:237.00px;height:0.90px;background:#d0d0d0;"></div>
<div style="left:190.50px;top:444.73px;width:237.00px;height:0.90px;background:#d0d0d0;"></div>
<div style="left:190.50px;top:452.80px;width:237.00px;height:0.90px;background:#d0d0d0;"></div>
<div style="left:190.50px;top:460.87px;width:237.00px;height:0.90px;background:#d0d0d0;"></div>
<div style="left:190.50px;top:468.94px;width:237.00px;height:0.90px;background:#d0d0d0;"></div>
<div style="left:190.50px;top:477.01px;width:237.00px;height:0.90px;background:#d0d0d0;"></div>
<div style="left:190.40px;top:372.30px;width:0.90px;height:104.91px;background:#d0d0d0;"></div>
<div style="left:211.80px;top:372.30px;width:0.90px;height:104.91px;background:#d0d0d0;"></div>
<div style="left:297.50px;top:372.30px;width:0.90px;height:104.91px;background:#d0d0d0;"></div>
<div style="left:358.70px;top:372.30px;width:0.90px;height:104.91px;background:#d0d0d0;"></div>
<div style="left:385.80px;top:372.30px;width:0.90px;height:104.91px;background:#d0d0d0;"></div>
<div style="left:426.50px;top:372.30px;width:0.90px;height:104.91px;background:#d0d0d0;"></div>
<span class="t" style="left:191.60px;top:373.61px;font-size:5.80px;line-height:7.54px;color:#000;font-family:'Liberation Serif','Noto Serif CJK SC',serif;font-weight:bold;transform:scaleX(0.8131);">REFDES</span>
<span class="t" style="left:213.00px;top:373.61px;font-size:5.80px;line-height:7.54px;color:#000;font-family:'Liberation Serif','Noto Serif CJK SC',serif;font-weight:bold;transform:scaleX(0.8063);">COMP_DEVICE_TYPE</span>
<span class="t" style="left:298.70px;top:373.61px;font-size:5.80px;line-height:7.54px;color:#000;font-family:'Liberation Serif','Noto Serif CJK SC',serif;font-weight:bold;transform:scaleX(0.7720);">COMP_VALUE</span>
<span class="t" style="left:359.90px;top:373.61px;font-size:5.80px;line-height:7.54px;color:#000;font-family:'Liberation Serif','Noto Serif CJK SC',serif;font-weight:bold;transform:scaleX(0.7573);">COMP_TOL</span>
<span class="t" style="left:387.00px;top:373.61px;font-size:5.80px;line-height:7.54px;color:#000;font-family:'Liberation Serif','Noto Serif CJK SC',serif;font-weight:bold;transform:scaleX(0.7565);">COMP_PACKAGE</span>
<span class="t" style="left:191.80px;top:381.69px;font-size:5.60px;line-height:7.28px;color:#1c1c1c;font-family:'Liberation Serif','Noto Serif CJK SC',serif;transform:scaleX(0.8980);">B1301</span>
<span class="t" style="left:213.20px;top:381.69px;font-size:5.60px;line-height:7.28px;color:#1c1c1c;font-family:'Liberation Serif','Noto Serif CJK SC',serif;transform:scaleX(0.8775);">FB0603_FB0603_1000OHM_+/-25%</span>
<span class="t" style="left:298.90px;top:381.69px;font-size:5.60px;line-height:7.28px;color:#1c1c1c;font-family:'Liberation Serif','Noto Serif CJK SC',serif;transform:scaleX(0.8874);">1000ohm</span>
<span class="t" style="left:360.10px;top:381.69px;font-size:5.60px;line-height:7.28px;color:#1c1c1c;font-family:'Liberation Serif','Noto Serif CJK SC',serif;transform:scaleX(0.9555);">+/-25%</span>
<span class="t" style="left:387.20px;top:381.69px;font-size:5.60px;line-height:7.28px;color:#1c1c1c;font-family:'Liberation Serif','Noto Serif CJK SC',serif;transform:scaleX(0.8918);">FB0603</span>
<span class="t" style="left:191.80px;top:389.75px;font-size:5.60px;line-height:7.28px;color:#1c1c1c;font-family:'Liberation Serif','Noto Serif CJK SC',serif;transform:scaleX(0.8980);">B1501</span>
<span class="t" style="left:213.20px;top:389.75px;font-size:5.60px;line-height:7.28px;color:#1c1c1c;font-family:'Liberation Serif','Noto Serif CJK SC',serif;transform:scaleX(0.8876);">FB0603_FB0603_DNP_+/-25%</span>
<span class="t" style="left:298.90px;top:389.75px;font-size:5.60px;line-height:7.28px;color:#1c1c1c;font-family:'Liberation Serif','Noto Serif CJK SC',serif;transform:scaleX(0.7177);">DNP</span>
<span class="t" style="left:360.10px;top:389.75px;font-size:5.60px;line-height:7.28px;color:#1c1c1c;font-family:'Liberation Serif','Noto Serif CJK SC',serif;transform:scaleX(0.9555);">+/-25%</span>
<span class="t" style="left:387.20px;top:389.75px;font-size:5.60px;line-height:7.28px;color:#1c1c1c;font-family:'Liberation Serif','Noto Serif CJK SC',serif;transform:scaleX(0.8918);">FB0603</span>
<span class="t" style="left:191.80px;top:397.82px;font-size:5.60px;line-height:7.28px;color:#1c1c1c;font-family:'Liberation Serif','Noto Serif CJK SC',serif;transform:scaleX(0.8980);">B1601</span>
<span class="t" style="left:213.20px;top:397.82px;font-size:5.60px;line-height:7.28px;color:#1c1c1c;font-family:'Liberation Serif','Noto Serif CJK SC',serif;transform:scaleX(0.8727);">B1210_B1210_30OHM_+/-10%</span>
<span class="t" style="left:298.90px;top:397.82px;font-size:5.60px;line-height:7.28px;color:#1c1c1c;font-family:'Liberation Serif','Noto Serif CJK SC',serif;transform:scaleX(0.8619);">30ohm</span>
<span class="t" style="left:360.10px;top:397.82px;font-size:5.60px;line-height:7.28px;color:#1c1c1c;font-family:'Liberation Serif','Noto Serif CJK SC',serif;transform:scaleX(0.9555);">+/-10%</span>
<span class="t" style="left:387.20px;top:397.82px;font-size:5.60px;line-height:7.28px;color:#1c1c1c;font-family:'Liberation Serif','Noto Serif CJK SC',serif;transform:scaleX(0.8980);">B1210</span>
<span class="t" style="left:191.80px;top:405.89px;font-size:5.60px;line-height:7.28px;color:#1c1c1c;font-family:'Liberation Serif','Noto Serif CJK SC',serif;transform:scaleX(0.8980);">B1602</span>
<span class="t" style="left:213.20px;top:405.89px;font-size:5.60px;line-height:7.28px;color:#1c1c1c;font-family:'Liberation Serif','Noto Serif CJK SC',serif;transform:scaleX(0.8727);">B1210_B1210_30OHM_+/-10%</span>
<span class="t" style="left:298.90px;top:405.89px;font-size:5.60px;line-height:7.28px;color:#1c1c1c;font-family:'Liberation Serif','Noto Serif CJK SC',serif;transform:scaleX(0.8619);">30ohm</span>
<span class="t" style="left:360.10px;top:405.89px;font-size:5.60px;line-height:7.28px;color:#1c1c1c;font-family:'Liberation Serif','Noto Serif CJK SC',serif;transform:scaleX(0.9555);">+/-10%</span>
<span class="t" style="left:387.20px;top:405.89px;font-size:5.60px;line-height:7.28px;color:#1c1c1c;font-family:'Liberation Serif','Noto Serif CJK SC',serif;transform:scaleX(0.8980);">B1210</span>
<span class="t" style="left:191.80px;top:413.96px;font-size:5.60px;line-height:7.28px;color:#1c1c1c;font-family:'Liberation Serif','Noto Serif CJK SC',serif;transform:scaleX(0.8980);">B1603</span>
<span class="t" style="left:213.20px;top:413.96px;font-size:5.60px;line-height:7.28px;color:#1c1c1c;font-family:'Liberation Serif','Noto Serif CJK SC',serif;transform:scaleX(0.8775);">FB0603_FB0603_1000OHM_+/-25%</span>
<span class="t" style="left:298.90px;top:413.96px;font-size:5.60px;line-height:7.28px;color:#1c1c1c;font-family:'Liberation Serif','Noto Serif CJK SC',serif;transform:scaleX(0.8874);">1000ohm</span>
<span class="t" style="left:360.10px;top:413.96px;font-size:5.60px;line-height:7.28px;color:#1c1c1c;font-family:'Liberation Serif','Noto Serif CJK SC',serif;transform:scaleX(0.9555);">+/-25%</span>
<span class="t" style="left:387.20px;top:413.96px;font-size:5.60px;line-height:7.28px;color:#1c1c1c;font-family:'Liberation Serif','Noto Serif CJK SC',serif;transform:scaleX(0.8918);">FB0603</span>
<span class="t" style="left:191.80px;top:422.03px;font-size:5.60px;line-height:7.28px;color:#1c1c1c;font-family:'Liberation Serif','Noto Serif CJK SC',serif;transform:scaleX(0.8980);">B1604</span>
<span class="t" style="left:213.20px;top:422.03px;font-size:5.60px;line-height:7.28px;color:#1c1c1c;font-family:'Liberation Serif','Noto Serif CJK SC',serif;transform:scaleX(0.9116);">R0805_R0805_0R_+/-5%</span>
<span class="t" style="left:298.90px;top:422.03px;font-size:5.60px;line-height:7.28px;color:#1c1c1c;font-family:'Liberation Serif','Noto Serif CJK SC',serif;transform:scaleX(0.8207);">0R</span>
<span class="t" style="left:360.10px;top:422.03px;font-size:5.60px;line-height:7.28px;color:#1c1c1c;font-family:'Liberation Serif','Noto Serif CJK SC',serif;transform:scaleX(0.9550);">+/-5%</span>
<span class="t" style="left:387.20px;top:422.03px;font-size:5.60px;line-height:7.28px;color:#1c1c1c;font-family:'Liberation Serif','Noto Serif CJK SC',serif;transform:scaleX(0.8980);">R0805</span>
<span class="t" style="left:191.80px;top:430.10px;font-size:5.60px;line-height:7.28px;color:#1c1c1c;font-family:'Liberation Serif','Noto Serif CJK SC',serif;transform:scaleX(0.8980);">B1605</span>
<span class="t" style="left:213.20px;top:430.10px;font-size:5.60px;line-height:7.28px;color:#1c1c1c;font-family:'Liberation Serif','Noto Serif CJK SC',serif;transform:scaleX(0.9116);">R0805_R0805_0R_+/-5%</span>
<span class="t" style="left:298.90px;top:430.10px;font-size:5.60px;line-height:7.28px;color:#1c1c1c;font-family:'Liberation Serif','Noto Serif CJK SC',serif;transform:scaleX(0.8207);">0R</span>
<span class="t" style="left:360.10px;top:430.10px;font-size:5.60px;line-height:7.28px;color:#1c1c1c;font-family:'Liberation Serif','Noto Serif CJK SC',serif;transform:scaleX(0.9550);">+/-5%</span>
<span class="t" style="left:387.20px;top:430.10px;font-size:5.60px;line-height:7.28px;color:#1c1c1c;font-family:'Liberation Serif','Noto Serif CJK SC',serif;transform:scaleX(0.8980);">R0805</span>
<span class="t" style="left:191.80px;top:438.17px;font-size:5.60px;line-height:7.28px;color:#1c1c1c;font-family:'Liberation Serif','Noto Serif CJK SC',serif;transform:scaleX(0.8980);">B1607</span>
<span class="t" style="left:213.20px;top:438.17px;font-size:5.60px;line-height:7.28px;color:#1c1c1c;font-family:'Liberation Serif','Noto Serif CJK SC',serif;transform:scaleX(0.8775);">FB0603_FB0603_1000OHM_+/-25%</span>
<span class="t" style="left:298.90px;top:438.17px;font-size:5.60px;line-height:7.28px;color:#1c1c1c;font-family:'Liberation Serif','Noto Serif CJK SC',serif;transform:scaleX(0.8874);">1000ohm</span>
<span class="t" style="left:360.10px;top:438.17px;font-size:5.60px;line-height:7.28px;color:#1c1c1c;font-family:'Liberation Serif','Noto Serif CJK SC',serif;transform:scaleX(0.9555);">+/-25%</span>
<span class="t" style="left:387.20px;top:438.17px;font-size:5.60px;line-height:7.28px;color:#1c1c1c;font-family:'Liberation Serif','Noto Serif CJK SC',serif;transform:scaleX(0.8918);">FB0603</span>
<span class="t" style="left:191.80px;top:446.24px;font-size:5.60px;line-height:7.28px;color:#1c1c1c;font-family:'Liberation Serif','Noto Serif CJK SC',serif;transform:scaleX(0.8980);">B1608</span>
<span class="t" style="left:213.20px;top:446.24px;font-size:5.60px;line-height:7.28px;color:#1c1c1c;font-family:'Liberation Serif','Noto Serif CJK SC',serif;transform:scaleX(0.8775);">FB0603_FB0603_1000OHM_+/-25%</span>
<span class="t" style="left:298.90px;top:446.24px;font-size:5.60px;line-height:7.28px;color:#1c1c1c;font-family:'Liberation Serif','Noto Serif CJK SC',serif;transform:scaleX(0.8874);">1000ohm</span>
<span class="t" style="left:360.10px;top:446.24px;font-size:5.60px;line-height:7.28px;color:#1c1c1c;font-family:'Liberation Serif','Noto Serif CJK SC',serif;transform:scaleX(0.9555);">+/-25%</span>
<span class="t" style="left:387.20px;top:446.24px;font-size:5.60px;line-height:7.28px;color:#1c1c1c;font-family:'Liberation Serif','Noto Serif CJK SC',serif;transform:scaleX(0.8918);">FB0603</span>
<span class="t" style="left:191.80px;top:454.30px;font-size:5.60px;line-height:7.28px;color:#1c1c1c;font-family:'Liberation Serif','Noto Serif CJK SC',serif;transform:scaleX(0.8980);">B1801</span>
<span class="t" style="left:213.20px;top:454.30px;font-size:5.60px;line-height:7.28px;color:#1c1c1c;font-family:'Liberation Serif','Noto Serif CJK SC',serif;transform:scaleX(0.8876);">FB0603_FB0603_DNP_+/-25%</span>
<span class="t" style="left:298.90px;top:454.30px;font-size:5.60px;line-height:7.28px;color:#1c1c1c;font-family:'Liberation Serif','Noto Serif CJK SC',serif;transform:scaleX(0.7177);">DNP</span>
<span class="t" style="left:360.10px;top:454.30px;font-size:5.60px;line-height:7.28px;color:#1c1c1c;font-family:'Liberation Serif','Noto Serif CJK SC',serif;transform:scaleX(0.9555);">+/-25%</span>
<span class="t" style="left:387.20px;top:454.30px;font-size:5.60px;line-height:7.28px;color:#1c1c1c;font-family:'Liberation Serif','Noto Serif CJK SC',serif;transform:scaleX(0.8918);">FB0603</span>
<span class="t" style="left:191.80px;top:462.38px;font-size:5.60px;line-height:7.28px;color:#1c1c1c;font-family:'Liberation Serif','Noto Serif CJK SC',serif;transform:scaleX(0.8207);">C4</span>
<span class="t" style="left:213.20px;top:462.38px;font-size:5.60px;line-height:7.28px;color:#1c1c1c;font-family:'Liberation Serif','Noto Serif CJK SC',serif;transform:scaleX(0.9109);">C0402_C0402_100NF_+/-20%</span>
<span class="t" style="left:298.90px;top:462.38px;font-size:5.60px;line-height:7.28px;color:#1c1c1c;font-family:'Liberation Serif','Noto Serif CJK SC',serif;transform:scaleX(0.9362);">100nF</span>
<span class="t" style="left:360.10px;top:462.38px;font-size:5.60px;line-height:7.28px;color:#1c1c1c;font-family:'Liberation Serif','Noto Serif CJK SC',serif;transform:scaleX(0.9555);">+/-20%</span>
<span class="t" style="left:387.20px;top:462.38px;font-size:5.60px;line-height:7.28px;color:#1c1c1c;font-family:'Liberation Serif','Noto Serif CJK SC',serif;transform:scaleX(0.8980);">C0402</span>
<span class="t" style="left:191.80px;top:470.44px;font-size:5.60px;line-height:7.28px;color:#1c1c1c;font-family:'Liberation Serif','Noto Serif CJK SC',serif;transform:scaleX(0.8207);">C5</span>
<span class="t" style="left:213.20px;top:470.44px;font-size:5.60px;line-height:7.28px;color:#1c1c1c;font-family:'Liberation Serif','Noto Serif CJK SC',serif;transform:scaleX(0.9109);">C0402_C0402_100NF_+/-20%</span>
<span class="t" style="left:298.90px;top:470.44px;font-size:5.60px;line-height:7.28px;color:#1c1c1c;font-family:'Liberation Serif','Noto Serif CJK SC',serif;transform:scaleX(0.9362);">100nF</span>
<span class="t" style="left:360.10px;top:470.44px;font-size:5.60px;line-height:7.28px;color:#1c1c1c;font-family:'Liberation Serif','Noto Serif CJK SC',serif;transform:scaleX(0.9555);">+/-20%</span>
<span class="t" style="left:387.20px;top:470.44px;font-size:5.60px;line-height:7.28px;color:#1c1c1c;font-family:'Liberation Serif','Noto Serif CJK SC',serif;transform:scaleX(0.8980);">C0402</span>
<div style="left:428.50px;top:0.00px;width:4.50px;height:468.00px;background:linear-gradient(to right,rgba(0,0,0,0),rgba(0,0,0,0.16));"></div>
<div style="left:432.60px;top:0.00px;width:432.40px;height:468.00px;background:#fff;border-left:0.9px solid #858585;"></div>
<svg style="left:436.80px;top:2.70px" width="6.5" height="7.1" viewBox="0 0 8 8"><rect x="0" y="0" width="8" height="8" fill="#86dc80"/><path d="M0.5 7.6 L3 2.2 L4.6 5.2 L7.6 0.4" stroke="#e0202a" stroke-width="1.7" fill="none"/><path d="M0.6 1.6h2.2M5 6.6h2.4" stroke="#2c9a3a" stroke-width="1.1"/></svg>
<span class="t" style="left:446.20px;top:3.91px;font-size:6.00px;line-height:7.80px;color:#2c2c2c;transform:scaleX(0.9734);">Dangling Lines, Via and Antenna Report</span>
<svg style="left:810.00px;top:2.00px" width="28" height="9" viewBox="0 0 28 9"><path d="M1.2 4.7h4.6" stroke="#333" stroke-width="0.75" fill="none"/><rect x="21.4" y="1.8" width="4.7" height="4.9" fill="none" stroke="#333" stroke-width="0.7"/></svg>
<svg style="left:850.60px;top:3.50px" width="5.6" height="5.6" viewBox="0 0 5.6 5.6"><path d="M0.4 0.4L5.2 5.2M5.2 0.4L0.4 5.2" stroke="#333" stroke-width="0.7"/></svg>
<div style="left:433.50px;top:13.80px;width:431.50px;height:14.00px;background:#f0f0f0;"></div>
<div style="left:433.50px;top:27.70px;width:431.50px;height:1.50px;background:#adadad;"></div>
<div style="left:433.50px;top:29.20px;width:0.80px;height:440.00px;background:#cdcdcd;"></div>
<div style="left:544.30px;top:16.50px;width:216.60px;height:9.10px;background:#fff;border:0.8px solid #8f8f8f;border-radius:1.2px;"></div>
<span class="t" style="left:522.00px;top:18.10px;font-size:5.70px;line-height:7.41px;color:#1a1a1a;font-family:'Liberation Serif','Noto Serif CJK SC',serif;font-weight:bold;transform:scaleX(0.9705);">Search:</span>
<div style="left:519.00px;top:15.40px;width:0.70px;height:10.80px;background:#d0d0d0;"></div>
<span class="t" style="left:796.40px;top:18.11px;font-size:5.60px;line-height:7.28px;color:#222;font-family:'Liberation Serif','Noto Serif CJK SC',serif;font-weight:bold;transform:scaleX(0.9362);">Match word</span>
<span class="t" style="left:833.90px;top:18.11px;font-size:5.60px;line-height:7.28px;color:#222;font-family:'Liberation Serif','Noto Serif CJK SC',serif;font-weight:bold;transform:scaleX(1.0084);">Match case</span>
<div style="left:788.90px;top:18.10px;width:5.90px;height:5.90px;background:#fff;border:0.6px solid #777;"></div>
<div style="left:826.40px;top:18.10px;width:5.90px;height:5.90px;background:#fff;border:0.6px solid #777;"></div>
<svg style="left:433px;top:13px" width="432" height="16" viewBox="433 13 432 16"><path d="M436.30 24.70L440.40 20.60" stroke="#4a4a4a" stroke-width="0.8" stroke-linecap="round" fill="none"/><path d="M442.90 18.20L440.90 20.20" stroke="#2aa83a" stroke-width="2.6" stroke-linecap="round" fill="none"/><path d="M439.30 18.90L442.30 21.90" stroke="#1f8f30" stroke-width="1.5" stroke-linecap="round" fill="none"/><path d="M441.90 16.50L444.70 19.30" stroke="#35b846" stroke-width="1.9" stroke-linecap="round" fill="none"/><path d="M451.60 18.20l5.00 5.00M456.60 18.20l-5.00 5.00" fill="none" stroke="#b4501e" stroke-width="1.7" stroke-linecap="round"/><path d="M464.00 24.00v-6.2h3l1 1.2h4v1.6" fill="#f7c27a" stroke="#ea9a3c" stroke-width="0.8" /><path d="M464.00 24.00l1.8-3.8h7.4l-1.8 3.8z" fill="#fff" stroke="#ea9a3c" stroke-width="0.8" /><rect x="478.70" y="17.50" width="7.20" height="6.80" fill="#7d97dd" stroke="#5b78c7" stroke-width="0.8" rx="0.6"/><rect x="479.90" y="17.80" width="4.80" height="2.60" fill="#fff"/><rect x="480.60" y="21.80" width="3.40" height="2.40" fill="#fff"/><rect x="493.30" y="16.60" width="5.40" height="3.60" fill="#f4f4f4" stroke="#8c8c8c" stroke-width="0.6"/><rect x="491.30" y="19.60" width="9.50" height="3.60" fill="#9a9a9a" stroke="#777" stroke-width="0.5" rx="0.8"/><rect x="492.90" y="22.00" width="6.20" height="2.40" fill="#e8e8e8" stroke="#8c8c8c" stroke-width="0.5"/><circle cx="510.40" cy="20.20" r="4.10" fill="#aebfec" stroke="#6a80c4" stroke-width="0.7"/><path d="M509.20 23.40l1.6 2.4l1.2-2.6z" fill="#6a82c8" /><circle cx="509.80" cy="19.20" r="2.60" fill="#dbe4f8"/><text x="508.60" y="22.50" font-family="Liberation Sans, sans-serif" font-weight="bold" font-size="6.4" fill="#2a3f96">?</text><circle cx="767.40" cy="20.90" r="4.50" fill="#3f9f1c" stroke="#1f6a0a" stroke-width="0.7"/><ellipse cx="767.40" cy="19" rx="3.2" ry="2" fill="#7fcf5a" opacity="0.55"/><path d="M770.00 20.9h-4.60M767.20 18.5l-2.40 2.4l2.40 2.4" fill="none" stroke="#fff" stroke-width="1.4" /><circle cx="781.40" cy="20.90" r="4.50" fill="#3f9f1c" stroke="#1f6a0a" stroke-width="0.7"/><ellipse cx="781.40" cy="19" rx="3.2" ry="2" fill="#7fcf5a" opacity="0.55"/><path d="M778.80 20.9h4.60M781.60 18.5l2.40 2.4l-2.40 2.4" fill="none" stroke="#fff" stroke-width="1.4" /></svg>
<pre id="rep">{=====================================================================}
{                                                                     }
{    Dangling Line, Via and Antenna Report                            }
{                                                                     }
{    Drawing          : 1.brd                                         }
{    Software Version : 17.2S083                                      }
{    Date/Time        : Tue Feb 20 10:40:26 2024                      }
{                                                                     }
{=====================================================================}


Report methodology:
  - Dangling lines have at least one end not connected.
  - Dangling vias have one or no connection
      - Plus are not a test, thieving or netshort property via.
  - Antenna vias do not have connections on their start and end layers.
      - Plus they are not a thieving vias.
      - Optionally, VOLTAGE nets, testvias and through vias can be suppressed with
        the environment variable report_antennavia.
      - Section may be suppressed by variable report_noantennavia.
  - Not part of the current partition.
  - To suppress items in dangle report add the OK_DANGLE property to the via
    or connect line.

&lt;&lt; Dangling Lines &gt;&gt;  - Location marked with a star (*) is dangling.
                      Layer                  Length       Location
  ------------------------------------------------------------------------------------------
  N33285375            TOP                    0.024      (<a class="v">-149.065 40.761</a>) to *(<a>-149.089 40.761</a>)
  4G_WAKEUP_OUT        L3                     3.776     *(<a class="v">-121.<span class="sel">672</span> 33.492</a>) to  (<a>-121.139 37.047</a>)
  N33096               TOP                    0.090      (<a>-127.838 -0.836</a>) to *(<a>-127.838 -0.926</a>)
  P3_TXRXB_P           TOP                    0.344      (<a>-109.707 -69.314</a>) to *(<a>-110.051 -69.314</a>)
  N35096769            TOP                    0.005     *(<a>-212.443 49.630</a>) to  (<a>-212.438 49.630</a>)
  N35096769            TOP                    0.007     *(<a>-212.443 51.980</a>) to  (<a>-212.438 51.985</a>)
  P4_TXRXA_P           TOP                    0.094      (<a>-102.572 110.203</a>) to *(<a>-102.506 110.136</a>)
  N37005374            TOP                    0.628     *(<a>-131.847 -50.365</a>) to  (<a>-131.842 -49.743</a>)
  USBC_TX2_P           TOP                    0.150     *(<a>-89.329 -25.154</a>) to  (<a>-89.479 -25.154</a>)
  USBC_TX2_N           TOP                    0.150     *(<a>-89.329 -25.654</a>) to  (<a>-89.479 -25.654</a>)
  DVDDH                TOP                    0.149      (<a>-165.310 103.762</a>) to *(<a>-165.310 103.613</a>)
  USBC_CC1             TOP                    0.024     *(<a>-92.820 -17.643</a>) to  (<a>-92.820 -17.619</a>)
  USBC_RX1_N           TOP                    0.150     *(<a>-89.329 -29.154</a>) to  (<a>-89.479 -29.154</a>)
  USBC_MUX_OE_N        TOP                    0.017     *(<a>-104.300 -6.487</a>) to  (<a>-104.300 -6.504</a>)
  USBC_RX1_P           TOP                    0.150     *(<a>-89.329 -29.654</a>) to  (<a>-89.479 -29.654</a>)
  USBC_VBUS            TOP                    0.150     *(<a>-89.329 -28.654</a>) to  (<a>-89.479 -28.654</a>)
  USBC_CC2             TOP                    0.024     *(<a>-92.023 -17.665</a>) to  (<a>-92.023 -17.641</a>)
  USBC_LSW_EN_R        TOP                    0.024     *(<a>-88.178 -17.482</a>) to  (<a>-88.202 -17.482</a>)
  USBC_CON_P           BOTTOM                 0.424      (<a>-92.946 -26.384</a>) to *(<a>-93.015 -25.989</a>)
  P2_TXRXA_P           TOP                    0.023      (<a>-98.436 80.563</a>) to *(<a>-98.420 80.579</a>)
  VREF_MCU             TOP                    0.001      (<a>-190.773 11.083</a>) to *(<a>-190.774 11.083</a>)
  VREF_MCU             TOP                    0.001      (<a>-192.279 11.081</a>) to *(<a>-192.279 11.082</a>)
  HW_ID1               TOP                    0.001     *(<a>-177.395 12.758</a>) to  (<a>-177.395 12.757</a>)
  HW_ID2               TOP                    0.001     *(<a>-178.482 12.758</a>) to  (<a>-178.482 12.757</a>)
  SONAR_UART2_RX       TOP                    0.025      (<a>-164.447 -8.560</a>) to *(<a>-164.429 -8.558</a>)
  VDDA_MCU             BOTTOM                 0.030     *(<a>-189.389 5.012</a>) to  (<a>-189.368 5.033</a>)
  VDD_MCU              L4                    26.259     *(<a>-210.252 -44.729</a>) to  (<a>-187.051 -51.009</a>)
  VDD_MCU              TOP                    0.743     *(<a>-206.965 -25.197</a>) to  (<a>-207.112 -25.879</a>)
  VDD_MCU              BOTTOM                 2.594     *(<a>-165.905 0.805</a>) to  (<a>-167.099 2.698</a>)
  RESERVE_GPIO_PD4     BOTTOM                 0.088      (<a>-169.956 -10.560</a>) to *(<a>-169.868 -10.560</a>)
  HUB_UART1_RX         TOP                    0.001     *(<a>-209.561 -18.949</a>) to  (<a>-209.561 -18.948</a>)
  ETH_RMII_RXD1        TOP                    0.001     *(<a>-181.902 20.764</a>) to  (<a>-181.903 20.764</a>)
  ETH_RMII_RXD0        TOP                    0.001      (<a>-177.696 21.351</a>) to *(<a>-177.696 21.352</a>)
  CAN_1_L              TOP                   37.527     *(<a>-206.226 -30.222</a>) to  (<a>-200.729 -60.650</a>)
  CAN_1_L              L4                     4.916     *(<a>-211.019 75.072</a>) to  (<a>-206.847 75.671</a>)
  CAN_1_H              TOP                   38.264     *(<a>-206.010 -30.006</a>) to  (<a>-200.729 -60.434</a>)
  CAN_1_H              L4                     5.172     *(<a>-210.803 74.856</a>) to  (<a>-151.103 72.993</a>)
  N42313664            TOP                    0.001      (<a>-175.933 12.854</a>) to *(<a>-175.933 12.854</a>)</pre>
<div style="left:857.40px;top:28.80px;width:7.60px;height:439.20px;background:#f0f0f0;"></div>
<div style="left:857.80px;top:37.60px;width:7.20px;height:18.00px;background:#cdcdcd;"></div>
<div style="left:858.80px;top:44.40px;width:4.60px;height:4.40px;background:#e9e9e9;"></div>
<div style="left:864.30px;top:0.00px;width:0.70px;height:29.00px;background:#6a6a6a;"></div>
<svg style="left:858.40px;top:32.40px" width="4.6" height="3" viewBox="0 0 4.6 3"><path d="M0.4 2.6L2.3 0.6L4.2 2.6" fill="none" stroke="#555" stroke-width="0.8"/></svg>
<svg style="left:858.40px;top:461.60px" width="4.6" height="3" viewBox="0 0 4.6 3"><path d="M0.4 0.4L2.3 2.4L4.2 0.4" fill="none" stroke="#555" stroke-width="0.8"/></svg>
<div style="left:433.40px;top:466.40px;width:431.60px;height:1.60px;background:#adadad;"></div>
<svg style="left:0;top:0" width="865" height="468" viewBox="0 0 865 468">
<g fill="#f0403f">
<path d="M420.2 235.6 L441.5 225.8 L440.4 229.6 L615.6 222.2 L615.8 226.2 L440.4 240.2 L440 245.4 Z"/>
<path d="M420.4 191 L443 190.2 L440.8 194.4 L480 214.8 L478.4 218.6 L435.6 201.4 L435.4 206.4 Z"/>
<path d="M538.9 197 L524.4 202.8 L528.8 204.8 L514.4 220.6 L516.8 222.2 L533.2 207.8 L536 212.2 Z"/>
</g>
<text x="379.6" y="237.5" font-family="Liberation Sans, sans-serif" font-size="16.8" fill="#ee1212" stroke="#ee1212" stroke-width="0.45" textLength="106.6" lengthAdjust="spacingAndGlyphs">chipdebug.com</text>
<text x="535" y="194.6" font-family="Noto Sans CJK SC, sans-serif" font-size="9.4" fill="#f2554a">显示在第三层</text>
</svg>
<div style="left:522.00px;top:456.60px;width:67.60px;height:12.00px;background:#f6f9ff;border-radius:0 2px 0 0;"></div>
<div style="left:510.20px;top:455.80px;width:13.00px;height:13.00px;background:#f0452a;border-radius:3px;transform:rotate(-8deg);"></div>
<span class="t" style="left:512.40px;top:456.21px;font-size:12.00px;line-height:15.60px;color:#fff;font-weight:bold;font-style:italic;">S</span>
<span class="t" style="left:526.40px;top:458.41px;font-size:7.20px;line-height:9.36px;color:#1f7be0;font-family:'Liberation Sans','Noto Sans CJK SC',sans-serif;font-weight:bold;">中</span>
<svg style="left:536px;top:456px" width="54" height="12" viewBox="536 454.4 54 12"><circle cx="540.00" cy="459.60" r="0.90" fill="#1f7be0"/><path d="M542.2 461.6c0.8 0.6 0.4 1.8-0.6 2.2" fill="none" stroke="#1f7be0" stroke-width="0.9" /><rect x="550.60" y="457.00" width="2.60" height="5.00" fill="#1f7be0" rx="1.3"/><path d="M549.4 460.4c0 4 5 4 5 0M551.9 463.4v1.6" fill="none" stroke="#1f7be0" stroke-width="0.8" /><rect x="557.60" y="458.60" width="7.80" height="5.40" fill="none" stroke="#1f7be0" stroke-width="0.9" rx="0.6"/><path d="M559.2 460.4h4.6M559.2 462.2h4.6" fill="none" stroke="#1f7be0" stroke-width="0.7" /><path d="M568.8 458l2-1h2.6l2 1l1 2.2l-1.4 0.8l-0.6-1v5h-4.6v-5l-0.6 1l-1.4-0.8z" fill="#1f7be0" /><rect x="580.40" y="457.60" width="2.80" height="2.80" fill="#1f7be0" rx="0.5"/><rect x="584.00" y="457.60" width="2.80" height="2.80" fill="#1f7be0" rx="0.5"/><rect x="580.40" y="461.20" width="2.80" height="2.80" fill="#1f7be0" rx="0.5"/><rect x="584.00" y="461.20" width="2.80" height="2.80" fill="#1f7be0" rx="0.5"/></svg>
<span class="t" style="left:712.60px;top:441.00px;font-size:17.20px;line-height:22.36px;color:rgba(98,98,98,0.8);font-family:'Liberation Sans','Noto Sans CJK SC',sans-serif;transform:scaleX(0.9360);font-weight:300;text-shadow:0 0 1.2px #fff,0.7px 0.7px 0.8px #fff,-0.7px -0.7px 0.8px #fff;">CSDN @</span>
<span class="t" style="left:779.40px;top:441.00px;font-size:17.40px;line-height:22.62px;color:rgba(98,98,98,0.8);font-family:'Liberation Sans','Noto Sans CJK SC',sans-serif;transform:scaleX(1.0003);font-weight:300;text-shadow:0 0 1.2px #fff,0.7px 0.7px 0.8px #fff,-0.7px -0.7px 0.8px #fff;">刘小同学</span>
</div>
</body></html>
